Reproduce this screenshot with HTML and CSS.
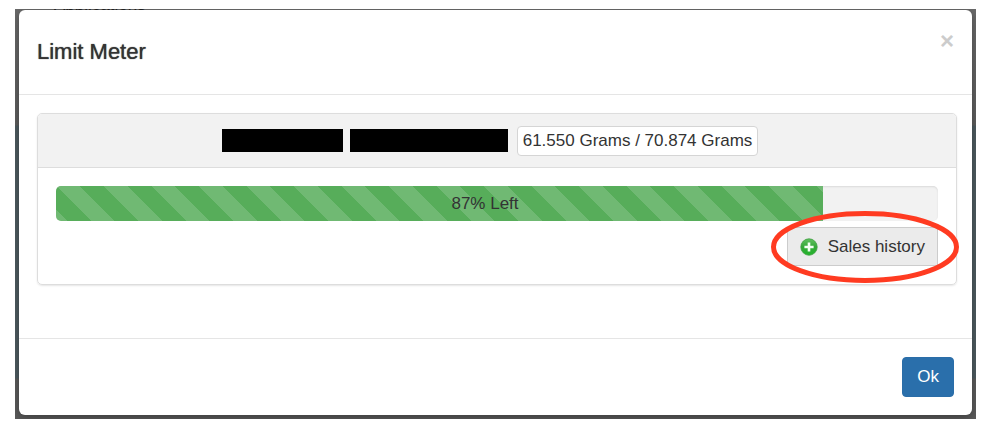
FILE: index.html
```
<!DOCTYPE html>
<html lang="en">
<head>
<meta charset="utf-8">
<title>Limit Meter</title>
<link rel="stylesheet" href="styles.css">
</head>
<body>
<div class="backdrop">
  <div class="page-behind" aria-hidden="true">Applications</div>
  <section class="modal" role="dialog" aria-labelledby="modal-title">
    <header class="modal-header">
      <h1 class="modal-title" id="modal-title">Limit Meter</h1>
      <button class="close" type="button" aria-label="Close">×</button>
    </header>
    <div class="modal-body">
      <div class="panel">
        <div class="panel-heading">
          <span class="redacted redacted-first"></span>
          <span class="redacted redacted-last"></span>
          <span class="amount">61.550 Grams / 70.874 Grams</span>
        </div>
        <div class="panel-body">
          <div class="progress" role="progressbar" aria-valuenow="87" aria-valuemin="0" aria-valuemax="100">
            <div class="progress-bar" style="width: 87%"></div>
            <span class="progress-label">87% Left</span>
          </div>
          <div class="history">
            <button class="btn btn-default" type="button">
              <svg class="plus" viewBox="0 0 18 18" aria-hidden="true">
                <defs>
                  <linearGradient id="green" x1="0" y1="0" x2="0" y2="1">
                    <stop offset="0" stop-color="#62c160"/>
                    <stop offset="0.5" stop-color="#35a838"/>
                    <stop offset="1" stop-color="#22b52b"/>
                  </linearGradient>
                </defs>
                <circle cx="9" cy="9" r="8.2" fill="url(#green)" stroke="#3f9f40" stroke-width="0.8"/>
                <path d="M9 4.4v9.2M4.4 9h9.2" stroke="#f4fff4" stroke-width="2.6"/>
              </svg>
              Sales history
            </button>
            <svg class="ring" viewBox="0 0 190 74" aria-hidden="true">
              <ellipse cx="95" cy="37" rx="91.5" ry="33.5" fill="none" stroke="#ff3b21" stroke-width="5"/>
            </svg>
          </div>
        </div>
      </div>
    </div>
    <footer class="modal-footer">
      <button class="btn btn-primary" type="button">Ok</button>
    </footer>
  </section>
</div>
</body>
</html>
```
FILE: styles.css
```
* {
  box-sizing: border-box;
}

body {
  margin: 9px 17px 13px 15px;
  background: #fff;
  color: #333;
  font: 17px/24px "Liberation Sans", Arial, sans-serif;
}

.backdrop {
  position: relative;
  padding: 1px 4px 4px;
  overflow: hidden;
  background: linear-gradient(#696969 0, #5c5c5c 116px, #4d5a5f 117px, #4d5a5f 369px, #5a5a5a 370px);
}

.page-behind {
  position: absolute;
  top: -14px;
  left: 39px;
  line-height: 20px;
  color: #222;
}

.modal {
  position: relative;
  background: #fff;
  border-radius: 6px;
  box-shadow: 0 3px 8px rgba(0, 0, 0, 0.3);
}

.modal-header {
  display: flex;
  justify-content: space-between;
  align-items: flex-start;
  height: 85px;
  padding: 18px;
  border-bottom: 1px solid #e5e5e5;
}

.modal-title {
  margin: 12px 0 0;
  font-size: 22px;
  font-weight: 400;
  line-height: 24px;
  text-shadow: 0 0 1px #333;
}

.close {
  padding: 0;
  border: 0;
  background: none;
  color: #ccc;
  font: bold 24px/26px "Liberation Sans", Arial, sans-serif;
}

.modal-body {
  padding: 18px 15px 53px 18px;
}

.panel {
  border: 1px solid #ddd;
  border-radius: 5px;
  box-shadow: 0 1px 2px rgba(0, 0, 0, 0.1);
}

.panel-heading {
  display: flex;
  justify-content: center;
  align-items: center;
  height: 54px;
  padding-right: 14px;
  border-bottom: 1px solid #ddd;
  border-radius: 4px 4px 0 0;
  background: #f2f2f2;
}

.redacted {
  height: 23px;
  background: #000;
}

.redacted-first {
  width: 121px;
  margin-right: 7px;
}

.redacted-last {
  width: 158px;
  margin-right: 9px;
}

.amount {
  padding: 2px 5px;
  border: 1px solid #d5d5d5;
  border-radius: 4px;
  background: #fff;
}

.panel-body {
  padding: 18px;
}

.progress {
  display: grid;
  height: 35px;
  overflow: hidden;
  border-radius: 5px;
  background: #f2f2f2;
  box-shadow: inset 0 1px 2px rgba(0, 0, 0, 0.1);
}

.progress-bar,
.progress-label {
  grid-area: 1 / 1;
}

.progress-bar {
  background-color: #57ad5a;
  background-image: repeating-linear-gradient(45deg, rgba(255, 255, 255, 0.15) 0 12.5%, transparent 12.5% 25%);
  background-size: 95px 95px;
  box-shadow: inset 0 -1px 0 rgba(0, 0, 0, 0.1);
}

.progress-label {
  padding-right: 24px;
  line-height: 36px;
  text-align: center;
}

.history {
  position: relative;
  display: flex;
  justify-content: flex-end;
  padding-top: 6px;
}

.btn {
  display: flex;
  align-items: center;
  gap: 10px;
  height: 40px;
  padding: 0 14px;
  border: 1px solid #ccc;
  border-radius: 4px;
  font: inherit;
}

.btn-default {
  height: 39px;
  padding: 0 12px;
  border-radius: 0;
  background: #ebebeb;
  color: #333;
}

.plus {
  width: 18px;
  height: 18px;
}

.ring {
  position: absolute;
  top: -11px;
  right: -22px;
  width: 190px;
  height: 74px;
  pointer-events: none;
}

.modal-footer {
  display: flex;
  justify-content: flex-end;
  padding: 18px;
  border-top: 1px solid #e5e5e5;
}

.btn-primary {
  border-color: #2a6da8;
  background: #2a6fab;
  color: #fff;
}
```
